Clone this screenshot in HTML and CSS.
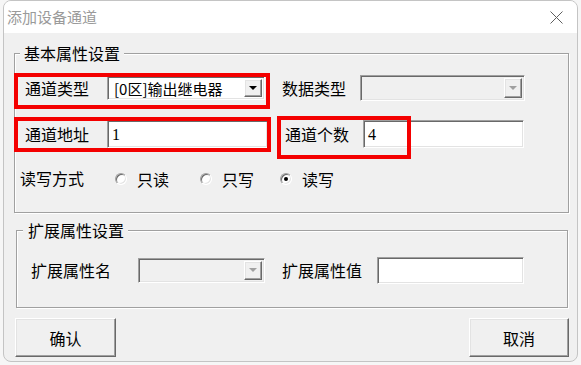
FILE: index.html
```html
<!DOCTYPE html>
<html lang="zh-CN">
<head>
    <meta charset="UTF-8">
    <meta name="viewport" content="width=device-width, initial-scale=1.0">
    <title>添加设备通道</title>
    <link rel="stylesheet" href="styles.css">
</head>
<body>

    <!-- Dialog -->
    <div class="window">
        <div class="titlebar">
            <span class="title">添加设备通道</span>
            <svg class="close" width="13" height="13" viewBox="0 0 13 13">
                <path d="M0.5 0.5 L12.5 12.5 M12.5 0.5 L0.5 12.5" stroke="#5f5f5f" stroke-width="1" fill="none"/>
            </svg>
        </div>

        <!-- Basic properties -->
        <fieldset class="group group-basic">
            <legend>基本属性设置</legend>

            <div class="row row-indent">
                <div class="field">
                    <label class="label">通道类型</label>
                    <div class="combo sunken combo-type">
                        <span class="combo-text">[0区]输出继电器</span>
                        <span class="combo-btn raised"><i class="arrow"></i></span>
                    </div>
                </div>
                <div class="field field-right">
                    <label class="label label-right">数据类型</label>
                    <div class="combo sunken combo-data disabled">
                        <span class="combo-text"></span>
                        <span class="combo-btn raised"><i class="arrow"></i></span>
                    </div>
                </div>
            </div>

            <div class="row row-indent row-second">
                <div class="field">
                    <label class="label">通道地址</label>
                    <div class="textbox sunken textbox-addr">1</div>
                </div>
                <div class="field field-right">
                    <label class="label label-right">通道个数</label>
                    <div class="textbox sunken textbox-count">4</div>
                </div>
            </div>

            <div class="row row-third">
                <label class="label label-mode">读写方式</label>
                <div class="option option-first"><span class="radio sunken"></span>只读</div>
                <div class="option"><span class="radio sunken"></span>只写</div>
                <div class="option"><span class="radio sunken checked"></span>读写</div>
            </div>
        </fieldset>

        <!-- Extended properties -->
        <fieldset class="group group-ext">
            <legend>扩展属性设置</legend>
            <div class="row row-ext">
                <label class="label label-ext">扩展属性名</label>
                <div class="combo sunken combo-ext disabled">
                    <span class="combo-text"></span>
                    <span class="combo-btn raised"><i class="arrow"></i></span>
                </div>
                <label class="label label-ext-value">扩展属性值</label>
                <div class="textbox sunken textbox-ext disabled"></div>
            </div>
        </fieldset>

        <div class="buttons">
            <button class="btn raised">确认</button>
            <button class="btn raised">取消</button>
        </div>

        <!-- Red marks drawn over the dialog -->
        <div class="mark mark-type"></div>
        <div class="mark mark-addr"></div>
        <div class="mark mark-count"></div>
    </div>

</body>
</html>
```

FILE: styles.css
```css
/* Page */
body {
    margin: 0;
    padding: 0;
    background: #f6f6f6;
    font-family: "Noto Sans CJK SC", "Noto Sans", sans-serif;
    font-size: 16px;
    color: #000;
}

/* Window */
.window {
    position: relative;
    width: 573px;
    height: 360px;
    margin-left: 3px;
    border: 1px solid #c4c4c4;
    border-radius: 8px;
    background: #f0f0f0;
    overflow: hidden;
    display: flex;
    flex-direction: column;
}

.titlebar {
    height: 32px;
    background: #fff;
    display: flex;
    align-items: center;
    justify-content: space-between;
    padding: 0 14px 0 3px;
    flex-shrink: 0;
}

.title {
    font-size: 15px;
    color: #9a9a9a;
    line-height: 20px;
}

.close {
    display: block;
    margin-top: 1px;
}

/* 3D borders */
.sunken {
    border: 1px solid;
    border-color: #a0a0a0 #fff #fff #a0a0a0;
    box-shadow: inset 1px 1px 0 #696969, inset -1px -1px 0 #e3e3e3;
}

.raised {
    border: 1px solid;
    border-color: #fff #696969 #696969 #fff;
    box-shadow: inset -1px -1px 0 #a0a0a0, inset 1px 1px 0 #e3e3e3;
}

/* Group boxes */
.group {
    border: 1px solid #a0a0a0;
    box-shadow: inset 1px 1px 0 #fff, 1px 1px 0 #fff;
    padding: 11px 0 19px 5px;
    min-inline-size: 0;
}

.group legend {
    padding: 0 4px;
    line-height: 20px;
    background: #f0f0f0;
}

.group-basic {
    margin: 10px 8px 0 10px;
}

.group-ext {
    margin: 7px 9px 0 12px;
    padding: 16px 0 23px 6px;
}

.group-ext legend {
    padding: 0 4px 0 5px;
}

/* Rows */
.row {
    display: flex;
    align-items: center;
    height: 28px;
}

.row-indent {
    padding-left: 5px;
}

.row-second {
    margin-top: 18px;
}

.row-third {
    margin-top: 17px;
}

.field {
    display: flex;
    align-items: center;
}

.field-right {
    margin-left: 17px;
}

.label {
    width: 82px;
    line-height: 20px;
    white-space: nowrap;
}

.label-right {
    width: 78px;
}

.label-mode {
    width: 95px;
    margin-top: -2px;
}

.label-ext {
    width: 107px;
    margin-left: 8px;
}

.label-ext-value {
    width: 95px;
    margin-left: 17px;
}

/* Combo boxes */
.combo {
    box-sizing: border-box;
    display: flex;
    align-items: stretch;
    background: #fff;
    padding: 2px;
}

.combo-type {
    width: 158px;
    height: 24px;
}

.combo-data {
    width: 165px;
    height: 26px;
}

.combo-ext {
    width: 127px;
    height: 25px;
}

.combo-text {
    flex: 1;
    padding-left: 4px;
    font-size: 15px;
    line-height: 19px;
    white-space: nowrap;
}

.combo-btn {
    width: 16px;
    flex-shrink: 0;
    background: #f0f0f0;
    display: flex;
    align-items: center;
    justify-content: center;
}

.arrow {
    width: 0;
    height: 0;
    border-left: 4px solid transparent;
    border-right: 4px solid transparent;
    border-top: 4px solid #000;
}

.disabled {
    background: #f0f0f0;
}

.disabled .arrow {
    border-top-color: #a0a0a0;
}

/* Text boxes */
.textbox {
    box-sizing: border-box;
    height: 28px;
    background: #fff;
    padding: 0 4px;
    font-family: "Liberation Serif", serif;
    font-size: 16px;
    line-height: 27px;
}

.textbox-addr {
    width: 161px;
}

.textbox-count {
    width: 161px;
}

.textbox-ext {
    width: 147px;
    height: 27px;
}

/* Radio buttons */
.option {
    display: flex;
    align-items: center;
    width: 80px;
    line-height: 20px;
}

.option-first {
    width: 85px;
}

.radio {
    box-sizing: border-box;
    width: 12px;
    height: 12px;
    border-radius: 50%;
    background: #fff;
    margin-right: 10px;
    display: flex;
    align-items: center;
    justify-content: center;
}

.radio.checked::after {
    content: "";
    width: 4px;
    height: 4px;
    border-radius: 50%;
    background: #000;
}

/* Bottom buttons */
.buttons {
    display: flex;
    justify-content: space-between;
    margin-top: 10px;
    padding: 0 8px 0 11px;
}

.btn {
    width: 101px;
    height: 39px;
    background: #f0f0f0;
    font-family: "Noto Sans CJK SC", sans-serif;
    font-size: 16px;
    color: #000;
    padding: 0;
}

.btn:last-child {
    width: 100px;
}

/* Red annotation frames */
.mark {
    position: absolute;
    box-sizing: border-box;
    border: 4px solid #f40000;
}

.mark-type {
    left: 10px;
    top: 72px;
    width: 256px;
    height: 36px;
}

.mark-addr {
    left: 10px;
    top: 116px;
    width: 257px;
    height: 35px;
}

.mark-count {
    left: 273px;
    top: 115px;
    width: 134px;
    height: 43px;
}
```
